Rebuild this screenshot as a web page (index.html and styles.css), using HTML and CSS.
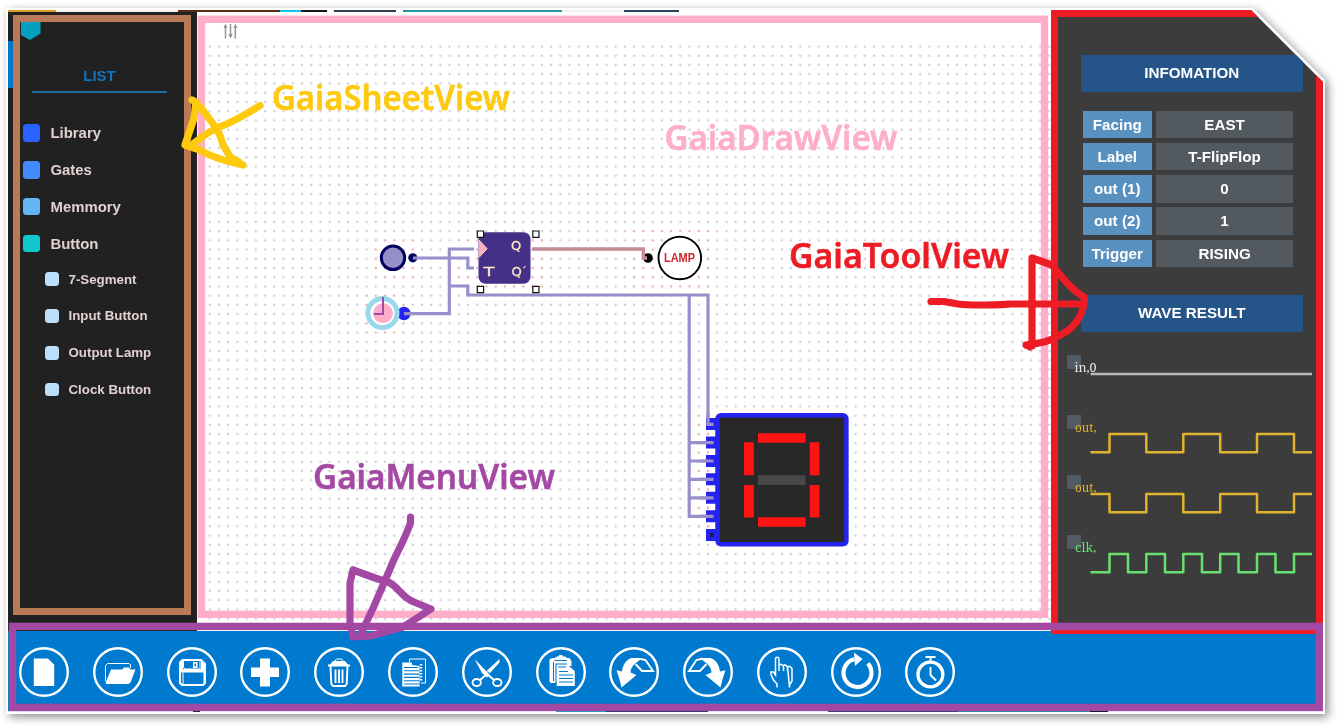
FILE: index.html
```
<!DOCTYPE html>
<html lang="en">
<head>
<meta charset="utf-8">
<title>Gaia views</title>
<link rel="stylesheet" href="styles.css">
</head>
<body>
<div class="shadow">
<div class="cutout">
<div class="frame">
  <div class="strip strip-top"></div>
  <div class="workspace">
    <aside class="sheet">
      <div class="sheet-outline">
        <svg class="shield" width="20" height="19" viewBox="0 0 20 19"><path d="M0 0H19.5V11.5L9 18 0 13Z" fill="#05a0c0"/></svg>
        <h2 class="list-title">LIST</h2>
        <ul class="list">
          <li><i class="sq library"></i>Library</li>
          <li><i class="sq gates"></i>Gates</li>
          <li><i class="sq memory"></i>Memmory</li>
          <li><i class="sq button"></i>Button</li>
        </ul>
        <ul class="list sub">
          <li><i class="sq"></i>7-Segment</li>
          <li><i class="sq"></i>Input Button</li>
          <li><i class="sq"></i>Output Lamp</li>
          <li><i class="sq"></i>Clock Button</li>
        </ul>
      </div>
    </aside>
    <main class="draw">
      <svg width="854" height="619" viewBox="197 12 854 619">
        <defs>
          <pattern id="dots" x="205.1" y="42" width="9.227" height="9.227" patternUnits="userSpaceOnUse"><path d="M4.6 3.1L6.1 4.6 4.6 6.1 3.1 4.6Z" fill="#cbcbd8"/></pattern>
          <pattern id="reddots" x="205.1" y="42" width="9.227" height="9.227" patternUnits="userSpaceOnUse"><path d="M4.6 3.1L6.1 4.6 4.6 6.1 3.1 4.6Z" fill="#eba4aa"/></pattern>
        </defs>
        <rect x="205" y="42" width="846" height="581" fill="url(#dots)"/>
        <g fill="#fff"><rect x="371" y="236" width="47" height="46"/><rect x="362" y="291" width="47" height="42"/><rect x="454" y="236" width="95" height="56"/><rect x="629" y="227" width="83" height="62"/><rect x="694" y="411" width="19" height="120"/></g>
        <g fill="url(#reddots)"><rect x="371" y="236" width="47" height="46"/><rect x="362" y="291" width="47" height="42"/><rect x="454" y="236" width="95" height="56"/><rect x="629" y="227" width="83" height="62"/><rect x="694" y="411" width="19" height="120"/></g>
        <rect x="201.5" y="19.3" width="843" height="595" fill="none" stroke="#ffaec9" stroke-width="7.4"/>
        <g stroke="#93959a" stroke-width="1.5" fill="#93959a"><path d="M225.5 25V38.5M230.5 24V37M235.3 25V38.5"/><path d="M223.5 28L225.5 23.5 227.5 28ZM228.2 34L230.5 38.5 232.8 34ZM233.4 28H237.5L235.4 24Z" stroke="none"/></g>

        <circle cx="393" cy="257.8" r="11.7" fill="#9591c8" stroke="#000060" stroke-width="3"/>
        <circle cx="412.8" cy="257.8" r="4.6" fill="#000060"/>
        <circle cx="404" cy="313.5" r="6.7" fill="#2523ef"/>
        <circle cx="382.5" cy="313" r="14.6" fill="#fff" stroke="#99d9ea" stroke-width="5"/>
        <circle cx="383" cy="313.2" r="10" fill="#ffaec9"/>
        <path d="M383 297V314H374" fill="none" stroke="#a349a4" stroke-width="2"/>

        <rect x="478.5" y="232.3" width="52" height="51.5" rx="7" fill="#453087"/>
        <path d="M478.6 240L487 248.7 478.6 257.5Z" fill="#ffaec9"/>
        <path d="M479 240L487 248.7 479 257.5" fill="none" stroke="#ffe8c0" stroke-width="1"/>
        <g class="pin-name"><text x="511" y="249.5">Q</text><text x="483.5" y="275.5" textLength="11" lengthAdjust="spacingAndGlyphs">T</text><text x="511.5" y="276">Q<tspan font-size="9" dy="-2">´</tspan></text></g>
        <g fill="none" stroke="#9990cb" stroke-width="3.2">
          <path d="M413 258H467.8V268H474"/><path d="M404 313.6H449.3V249H474"/><path d="M449.3 286H467.8V295H708V424H713"/><path d="M689.2 295V516.3H713M689.2 442.6H713M689.2 461H713M689.2 479.3H713M689.2 497.8H713"/>
        </g>
        <circle cx="648" cy="258" r="4.8" fill="#000"/>
        <path d="M532 249H643.3V258H647" fill="none" stroke="#c58b96" stroke-width="3.4"/>
        <circle cx="679.8" cy="258" r="21.3" fill="#fff" stroke="#000" stroke-width="1.9"/>
        <text class="lamp" x="664" y="262" textLength="31" lengthAdjust="spacingAndGlyphs">LAMP</text>
        <g fill="#fff" stroke="#111" stroke-width="1.2"><path d="M477.3 231H483.6V237.3H477.3ZM532.8 231H539V237.3H532.8ZM477.3 286.4H483.6V292.7H477.3ZM532.8 286.4H539V292.7H532.8Z"/></g>

        <path d="M706 418H718V430H706ZM706 436.5H718V448.5H706ZM706 455H718V467H706ZM706 473.3H718V485.3H706ZM706 491.8H718V503.8H706ZM706 510.2H718V522.2H706ZM706 529H718V541H706Z" fill="#2523ef"/>
        <path d="M708 411V424.3H713.5M700 442.6H713.5M700 461H713.5M700 479.3H713.5M700 497.8H713.5M700 516.3H713.5" fill="none" stroke="#9990cb" stroke-width="3.2"/>
        <rect x="710" y="533" width="4" height="4" fill="#1a1a55"/>
        <rect x="717.5" y="415.3" width="128.9" height="129" rx="3.5" fill="#282828" stroke="#2523ef" stroke-width="4.5"/>
        <path d="M758 433.3H805.6V442.7H758ZM744 442.2H753.8V475.2H744ZM809.8 442.2H819.4V475.2H809.8ZM744 485H753.8V517.5H744ZM809.8 485H819.4V517.5H809.8ZM758 517.2H805.6V526.7H758Z" fill="#ff1414"/>
        <rect x="758" y="475.2" width="47.5" height="9.8" fill="#484848"/>
      </svg>
    </main>
    <aside class="tools">
      <h3 class="bar">INFOMATION</h3>
      <dl class="props">
        <dt>Facing</dt><dd>EAST</dd>
        <dt>Label</dt><dd>T-FlipFlop</dd>
        <dt>out (1)</dt><dd>0</dd>
        <dt>out (2)</dt><dd>1</dd>
        <dt>Trigger</dt><dd>RISING</dd>
      </dl>
      <h3 class="bar">WAVE RESULT</h3>
      <svg class="waves" width="250" height="230" viewBox="1065 350 250 230">
        <path d="M1067 355H1081V369H1067ZM1067 415H1081V429H1067ZM1067 475H1081V489H1067ZM1067 535H1081V549H1067Z" fill="#535c63"/>
        <g fill="none" stroke-width="2.5" stroke-linejoin="round">
          <path d="M1090.5 374H1312" stroke="#b8b8b8"/>
          <g stroke="#dfb32f"><path d="M1090.5 452.3H1109.5V434H1146.3V452.3H1183.3V434H1220.2V452.3H1257V434H1294V452.3H1312"/><path d="M1090.5 494H1109.5V512.3H1146.3V494H1183.3V512.3H1220.2V494H1257V512.3H1294V494H1312"/></g>
          <path stroke="#68e070" d="M1090.5 572.3H1109.5V554H1128V572.3H1146.3V554H1165V572.3H1183.3V554H1202V572.3H1220.2V554H1238.5V572.3H1257V554H1275.5V572.3H1294V554H1312"/>
        </g>
        <g class="wave-name"><text x="1074.5" y="371.5" fill="#e8e8e8" textLength="22" lengthAdjust="spacingAndGlyphs">in,0</text><text x="1075" y="431.5" fill="#dfb32f" textLength="21.5" lengthAdjust="spacingAndGlyphs">out,</text><text x="1075" y="491.5" fill="#dfb32f" textLength="21.5" lengthAdjust="spacingAndGlyphs">out,</text><text x="1075" y="551.5" fill="#68e070">clk,</text></g>
      </svg>
    </aside>
  </div>
  <nav class="menu">
    <svg viewBox="0 0 50 50"><circle cx="25" cy="25" r="23.8"/><path class="f" d="M14.8 11.5H29L35.2 17.8V39H14.8Z"/></svg>
    <svg viewBox="0 0 50 50"><circle cx="25" cy="25" r="23.8"/><path class="t" d="M12.5 34V18.5L14.5 16.5H36L37.5 18V21"/><path class="f" d="M12.5 36L18 22.5H29L31 20.5H36L37.5 22.5H42.5L37.5 35.5 35.5 37H13.5Z"/></svg>
    <svg viewBox="0 0 50 50"><circle cx="25" cy="25" r="23.8"/><path class="m" d="M15.5 13H34L38 17V36L36 38H15L13 36V15.5Z"/><path class="f" d="M13 22H38V25.5H13ZM34 13L38.5 17V36H36.5V25L34 22ZM13 14H16V24H13Z"/><path class="t" d="M16.5 13V20.5L18 22H33V13M16 38V25.5"/><path class="f" d="M26 15H30.5V21H26Z"/><path d="M27.5 16.5H29V19.5H27.5Z" fill="#007acf"/></svg>
    <svg viewBox="0 0 50 50"><circle cx="25" cy="25" r="23.8"/><path class="f" d="M20 11.5H30V20.5H39V30H30V39.5H20V30H11V20.5H20Z"/></svg>
    <svg viewBox="0 0 50 50"><circle cx="25" cy="25" r="23.8"/><path class="f" d="M14 17.5H16L19 14H31L34 17.5H36V19.5H14Z"/><path class="t" d="M21 14L22.5 12H27.5L29 14"/><path class="m" d="M16.5 19L17.3 37 19 39H31L32.7 37 33.5 19M21.5 22.5V36M25 22.5V36M28.5 22.5V36"/></svg>
    <svg viewBox="0 0 50 50"><circle cx="25" cy="25" r="23.8"/><path class="t" d="M21.5 15V12H37.5V36H33"/><path class="f" d="M14.3 15.5H24V18L31.5 19V39.5H14.3Z"/><path class="cut" d="M16 20.5H30M16 23.8H31M16 27.1H31M16 30.4H31M16 33.7H31M16 37H31"/><path d="M33 17V35" fill="none" stroke="#fff" stroke-width="2.5" stroke-dasharray="1.5 1.5"/></svg>
    <svg viewBox="0 0 50 50"><circle cx="25" cy="25" r="23.8"/><path class="f" d="M12.5 12L27.5 27.5 25 30.5 20 26ZM37.5 12V15.5L28 26 24.5 24Z"/><path class="m" d="M25 27L18 33M25 27L32 33"/><ellipse class="m" cx="14.7" cy="35.5" rx="4.2" ry="3.5"/><ellipse class="m" cx="35.3" cy="35.5" rx="4.2" ry="3.5"/></svg>
    <svg viewBox="0 0 50 50"><circle cx="25" cy="25" r="23.8"/><path class="f" d="M13.5 12.5L16 11H19L20.5 9.5H23V8H26.5V9.5H29.5L31 11H33.5L35.5 14V19H33L38.8 24V39H20.5V36H14.5L13.5 34Z"/><path class="cut" d="M18.5 13.5H31M17.5 15V34M20 38V17H31M22 20H30M23 24.5H32M23 28H37M23 31.5H37M23 35H37"/></svg>
    <svg viewBox="0 0 50 50"><circle cx="25" cy="25" r="23.8"/><path class="f" d="M7.5 23.3L13 24.5C14 17 17.5 12.5 22.5 11H34L31 12.5 25.5 17C22.5 20 21.8 22.5 21.5 25.5L27.5 28 12.5 40.5C11 34 9.5 29 7.5 23.3Z"/><path class="m" d="M26 15L31 11.8 36.5 13 44 24H33L26.5 17"/></svg>
    <svg viewBox="0 0 50 50"><circle cx="25" cy="25" r="23.8"/><g transform="matrix(-1 0 0 1 50 0)"><path class="f" d="M7.5 23.3L13 24.5C14 17 17.5 12.5 22.5 11H34L31 12.5 25.5 17C22.5 20 21.8 22.5 21.5 25.5L27.5 28 12.5 40.5C11 34 9.5 29 7.5 23.3Z"/><path class="m" d="M26 15L31 11.8 36.5 13 44 24H33L26.5 17"/></g></svg>
    <svg viewBox="0 0 50 50"><circle cx="25" cy="25" r="23.8"/><path class="h" d="M20 40.5V37L16.5 33 14 27.5V25H16.5L18.5 28V12Q18.5 10.3 20.2 10.3T22 12V24M22 17.5H24.5L26.5 19V24M26.5 18H28.5L30.5 20V24M30.5 19.5H33L35 21.5V34L32.5 38V40.5Z"/></svg>
    <svg viewBox="0 0 50 50"><circle cx="25" cy="25" r="23.8"/><path d="M23.5 12.3A14 14 0 1 0 36.8 16.5" fill="none" stroke="#fff" stroke-width="4.2"/><path class="f" d="M23 5.5L31.5 12 24 19Z"/></svg>
    <svg viewBox="0 0 50 50"><circle cx="25" cy="25" r="23.8"/><circle class="dial" cx="25.4" cy="27.5" r="12.4"/><path class="m" d="M20.5 10H30.5M25.5 10V15M25.5 20V28L31 33.5M16 17L18.5 19M35 17L32.5 19"/></svg>
  </nav>
  <div class="strip strip-bottom"></div>
  <svg class="notes" width="1315" height="702" viewBox="8 10 1315 702">
    <rect x="12.5" y="626.4" width="1306.8" height="81" fill="none" stroke="#a349a4" stroke-width="7.4"/>
    <g fill="none" stroke-linecap="round" stroke-linejoin="round" stroke-width="7.2">
      <path stroke="#ffc90e" d="M260 105.5C245 115 231 123 219 127C207 132 200 139 193 144M192 100L196 102 194 118 185 145 200 150C213 158 227 161 243 165M196 102L205 113C216 128 219 130 223 145L231 158 239 162"/>
      <path stroke="#ed1c24" d="M931 301.5H944L958 304C975 306 992 305 1010 304H1078M1032 258V346M1032 258L1052 265C1064 280 1072 290 1084 297C1085 312 1076 327 1062 334C1050 342 1040 343 1026 345M1027 345L1030 347"/>
      <path stroke="#a349a4" d="M410.5 517V523C403 544 396 553 390 569L374 606 361 634M353 570L350 583V622L353 637 370 636 403 627 431 609 414 602C402 598 397 585 388 582L375 578 353 570"/>
    </g>
    <g class="names">
      <text x="272" y="109.5" fill="#ffc90e" stroke="#ffc90e" textLength="238" lengthAdjust="spacingAndGlyphs">GaiaSheetView</text>
      <text x="664.5" y="150.3" fill="#ffaec9" stroke="#ffaec9" textLength="233" lengthAdjust="spacingAndGlyphs">GaiaDrawView</text>
      <text x="789" y="267.5" fill="#ed1c24" stroke="#ed1c24" textLength="220" lengthAdjust="spacingAndGlyphs">GaiaToolView</text>
      <text x="313" y="488.8" fill="#a349a4" stroke="#a349a4" textLength="242" lengthAdjust="spacingAndGlyphs">GaiaMenuView</text>
    </g>
  </svg>
</div>
</div>
</div>
</body>
</html>
```

FILE: styles.css
```
* { box-sizing: border-box; }
body {
  margin: 0; width: 1341px; height: 728px; overflow: hidden;
  padding: 8px 0 0 6px; background: #fff;
  font-family: "Liberation Sans", Arial, sans-serif; font-weight: bold;
}
h2, h3, ul, dl, dd { margin: 0; padding: 0; }
.shadow { width: 1319px; height: 706px; filter: drop-shadow(3px 3px 5px rgba(0, 0, 0, .45)); }
.cutout {
  width: 1319px; height: 706px; padding: 2px; background: #fff;
  clip-path: polygon(0 0, 1247px 0, 1319px 72px, 1319px 706px, 0 706px);
}
.frame {
  position: relative; width: 1315px; height: 702px; background: #fff;
  display: flex; flex-direction: column;
  clip-path: polygon(0 0, 1243px 0, 1315px 72px, 1315px 702px, 0 702px);
}
.strip { flex: none; }
.strip-top {
  height: 2px;
  background: linear-gradient(90deg, #d89a28 0 48px, #f4f4f6 48px 170px, #5c2c18 170px 272px, #12c8e8 272px 293px, #151515 293px 319px, #fff 319px 326px, #304050 326px 388px, #fff 388px 395px, #2296a8 395px 554px, #f4f4f4 554px 616px, #2c4258 616px 671px, #fff 671px);
}
.strip-bottom {
  height: 1px;
  background: linear-gradient(90deg, #e4e6f8 0 185px, #222 185px 192px, #eef0fa 192px 548px, #2a9cc8 548px 598px, #283860 598px 700px, #e8f0fa 700px 820px, #303c80 820px 950px, #38a 950px 1082px, #112 1082px 1100px, #eef 1100px);
}
.workspace { display: flex; height: 619px; }
.sheet {
  width: 189px; padding: 3px 6px 16px 5px; color: #e2d0d0;
  background: linear-gradient(#0078c8, #0078c8) 0 29px / 5px 47px no-repeat #212121;
}
.sheet-outline { height: 600px; border: 7.5px solid #b97a57; }
.shield { display: block; margin-left: .5px; }
.list-title {
  width: 135px; height: 27px; margin: 25px 0 0 12px; text-align: center;
  font-size: 15px; line-height: 20px; color: #0f74bd; border-bottom: 2px solid #1c6c9e;
}
.list { list-style: none; margin-top: 21.5px; }
.list li {
  display: flex; align-items: center; gap: 10.5px; height: 36.9px;
  padding-left: 2.5px; font-size: 14.9px; white-space: nowrap;
}
.sq { width: 17.5px; height: 17.5px; border-radius: 3.5px; }
.library { background: #2962ff; }
.gates { background: #448aff; }
.memory { background: #64b5f6; }
.button { background: #10c8cc; }
.list.sub { margin-top: -1.5px; }
.sub li { padding-left: 25px; font-size: 13.3px; gap: 10px; }
.sub .sq { width: 13.5px; height: 13.5px; background: #bbdefb; }
.draw { width: 854px; height: 619px; }
.draw svg { display: block; }
.pin-name { font: normal 13px "DejaVu Sans", sans-serif; fill: #ffe8c0; stroke: #ffe8c0; stroke-width: .3px; }
.lamp { font-size: 12px; fill: #d0252c; }
.tools {
  width: 272px; height: 623.5px; margin-top: -2px; padding: 38px 0 0 23px;
  border: 7px solid #ed1c24; background: #3c3c3c; color: #fff;
  flex: none; position: relative; z-index: 1;
}
.bar {
  width: 221.5px; height: 37px; line-height: 36px; text-align: center;
  font-size: 15.2px; background: #245488;
}
.props {
  display: grid; grid-template-columns: 68.5px 137px; grid-auto-rows: 27.7px;
  gap: 4.6px; margin: 18.5px 0 27.6px 2px;
  font-size: 15.2px; line-height: 27px; text-align: center;
}
.props dt { background: #5890c0; }
.props dd { background: #52595f; }
.waves { display: block; margin: 18px 0 0 -16px; }
.wave-name { font: 13px "Noto Serif", "Liberation Serif", serif; }
.menu {
  height: 80px; padding: 16.3px 0 0 11px; background: #007acf;
  display: flex; align-items: flex-start; gap: 23.8px;
}
.menu svg { width: 50px; height: 50px; flex: none; }
.menu circle { fill: none; stroke: #fff; stroke-width: 2.4; }
.menu .dial { stroke-width: 3.4; }
.menu .f { fill: #fff; }
.menu .t { fill: none; stroke: #fff; stroke-width: 1; }
.menu .h { fill: none; stroke: #fff; stroke-width: 1.5; }
.menu .m { fill: none; stroke: #fff; stroke-width: 1.9; }
.menu .cut { fill: none; stroke: #007acf; stroke-width: 1.1; }
.notes { position: absolute; left: 0; top: 0; z-index: 2; }
.names { font: 600 33.5px "Noto Sans", "Open Sans", sans-serif; stroke-width: .5px; }
```
